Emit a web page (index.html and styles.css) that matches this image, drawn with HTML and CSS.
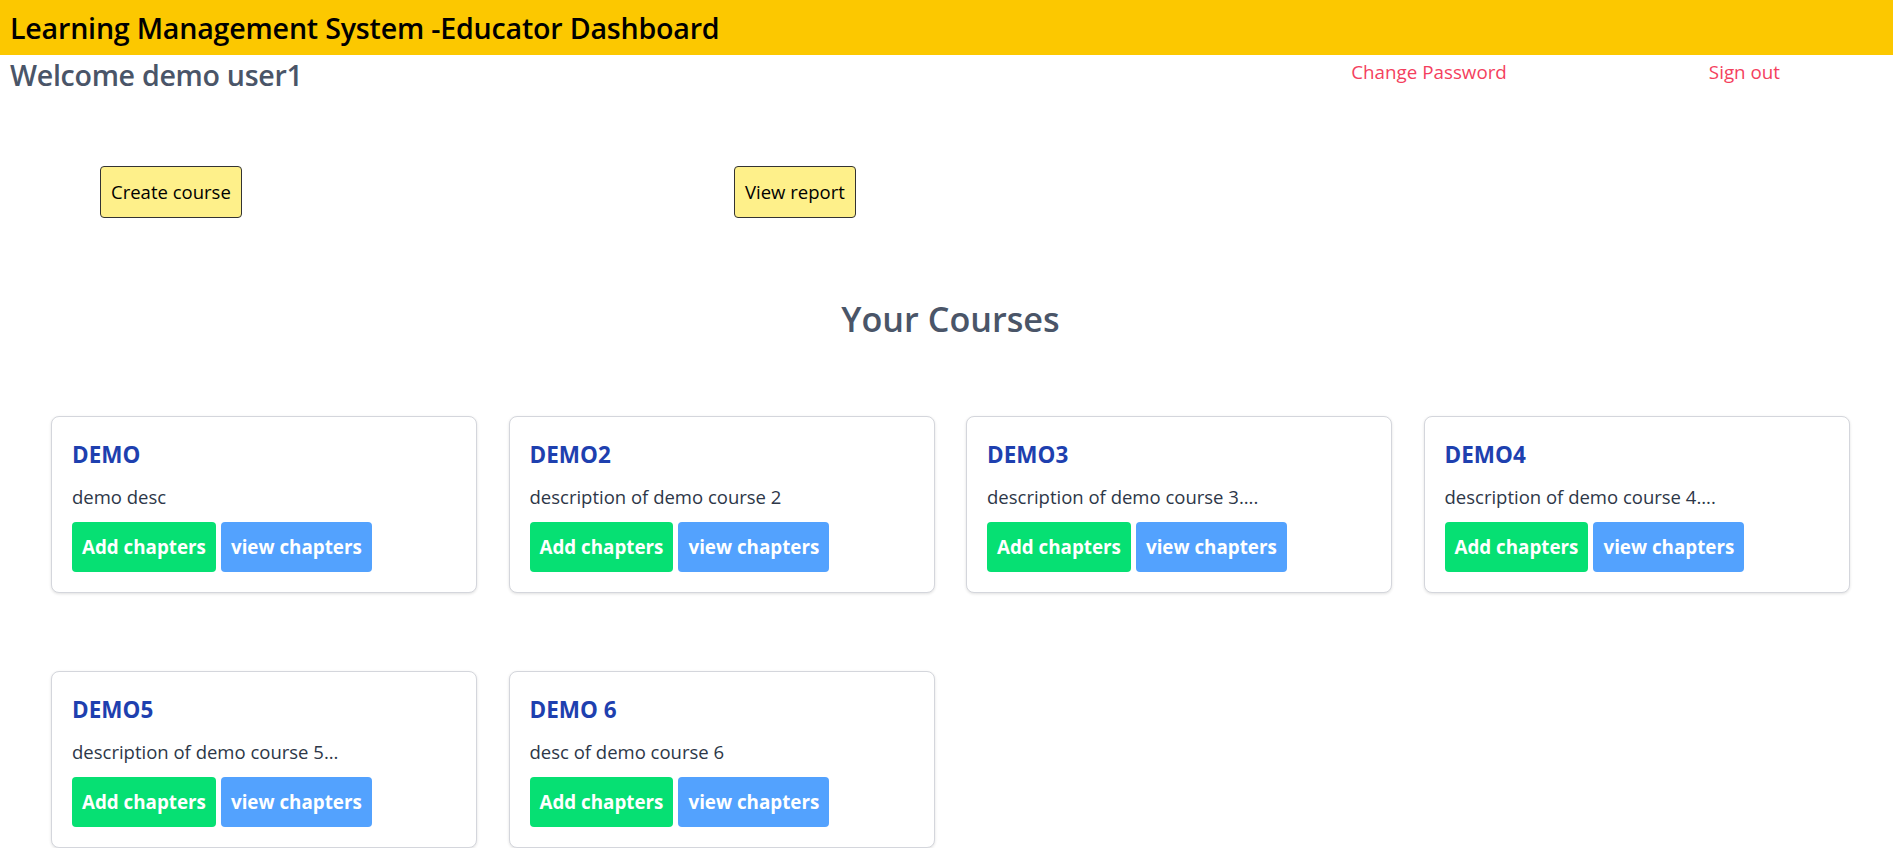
FILE: index.html
```html
<!DOCTYPE html>
<html lang="en">
<head>
<meta charset="utf-8">
<title>Educator Dashboard</title>
<link rel="stylesheet" href="styles.css">
</head>
<body>
<header class="topbar">
  <h1 class="topbar-title">Learning Management System -Educator Dashboard</h1>
</header>
<div class="userbar">
  <h2 class="welcome">Welcome demo user1</h2>
  <nav class="userlinks">
    <a class="userlink" href="#">Change Password</a>
    <a class="userlink" href="#">Sign out</a>
  </nav>
</div>
<div class="actions">
  <div class="action-cell"><button class="action-btn">Create course</button></div>
  <div class="action-cell"><button class="action-btn">View report</button></div>
</div>
<h2 class="section-title">Your Courses</h2>
<main class="course-grid">
  <div class="card">
    <h3 class="card-title">DEMO</h3>
    <p class="card-desc">demo desc</p>
    <div class="card-actions"><button class="btn btn-add">Add chapters</button><button class="btn btn-view">view chapters</button></div>
  </div>
  <div class="card">
    <h3 class="card-title">DEMO2</h3>
    <p class="card-desc">description of demo course 2</p>
    <div class="card-actions"><button class="btn btn-add">Add chapters</button><button class="btn btn-view">view chapters</button></div>
  </div>
  <div class="card">
    <h3 class="card-title">DEMO3</h3>
    <p class="card-desc">description of demo course 3....</p>
    <div class="card-actions"><button class="btn btn-add">Add chapters</button><button class="btn btn-view">view chapters</button></div>
  </div>
  <div class="card">
    <h3 class="card-title">DEMO4</h3>
    <p class="card-desc">description of demo course 4....</p>
    <div class="card-actions"><button class="btn btn-add">Add chapters</button><button class="btn btn-view">view chapters</button></div>
  </div>
  <div class="card">
    <h3 class="card-title">DEMO5</h3>
    <p class="card-desc">description of demo course 5...</p>
    <div class="card-actions"><button class="btn btn-add">Add chapters</button><button class="btn btn-view">view chapters</button></div>
  </div>
  <div class="card">
    <h3 class="card-title">DEMO 6</h3>
    <p class="card-desc">desc of demo course 6</p>
    <div class="card-actions"><button class="btn btn-add">Add chapters</button><button class="btn btn-view">view chapters</button></div>
  </div>
</main>
</body>
</html>
```
FILE: styles.css
```css
* { box-sizing: border-box; }
html, body { margin: 0; padding: 0; background: #ffffff; }
body {
  font-family: "Open Sans", "Noto Sans", "Liberation Sans", sans-serif;
  color: #000;
  overflow: hidden;
}
.topbar {
  background: #fcc800;
  height: 55px;
  padding: 5px 10px;
}
.topbar-title {
  margin: 0;
  font-size: 28.6px;
  line-height: 45px;
  font-weight: 600;
  color: #000;
  letter-spacing: -0.2px;
}
.userbar {
  display: flex;
  align-items: flex-start;
  padding-left: 10px;
}
.welcome {
  flex: 1;
  margin: 0;
  font-size: 28.6px;
  line-height: 40px;
  font-weight: 600;
  color: #4a5568;
  letter-spacing: -0.3px;
}
.userlinks {
  display: flex;
  gap: 202px;
  margin-right: 113px;
  padding-top: 2px;
}
.userlink {
  color: #f43f5e;
  text-decoration: none;
  font-size: 18.8px;
  line-height: 30px;
}
.actions {
  display: grid;
  grid-template-columns: 634px auto;
  padding-left: 100px;
  margin-top: 71px;
}
.action-btn {
  font-family: inherit;
  font-size: 18.5px;
  line-height: 30px;
  padding: 10px;
  background: #fef08a;
  border: 1px solid #333;
  border-radius: 4px;
  color: #000;
}
.section-title {
  margin: 78px 0 0;
  padding-left: 8px;
  text-align: center;
  font-size: 34.2px;
  line-height: 45px;
  font-weight: 600;
  color: #4a5568;
}
.course-grid {
  display: grid;
  grid-template-columns: repeat(4, 426px);
  column-gap: 31.5px;
  row-gap: 78px;
  padding-left: 51px;
  margin-top: 75px;
}
.card {
  border: 1px solid #d4d6dc;
  border-radius: 8px;
  padding: 20px;
  box-shadow: 0 1px 3px rgba(0, 0, 0, 0.12);
  background: #fff;
}
.card-title {
  margin: 0 0 10px;
  font-size: 22.5px;
  line-height: 35px;
  font-weight: 700;
  color: #1e40af;
}
.card-desc {
  margin: 0 0 10px;
  font-size: 18.5px;
  line-height: 30px;
  color: #2d3748;
}
.card-actions {
  display: flex;
  gap: 5px;
}
.btn {
  font-family: inherit;
  font-size: 18.8px;
  line-height: 30px;
  font-weight: 700;
  color: #fff;
  border: 0;
  border-radius: 4px;
  padding: 10px;
}
.btn-add { background: #06e073; }
.btn-view { background: #53a2fe; }
```
